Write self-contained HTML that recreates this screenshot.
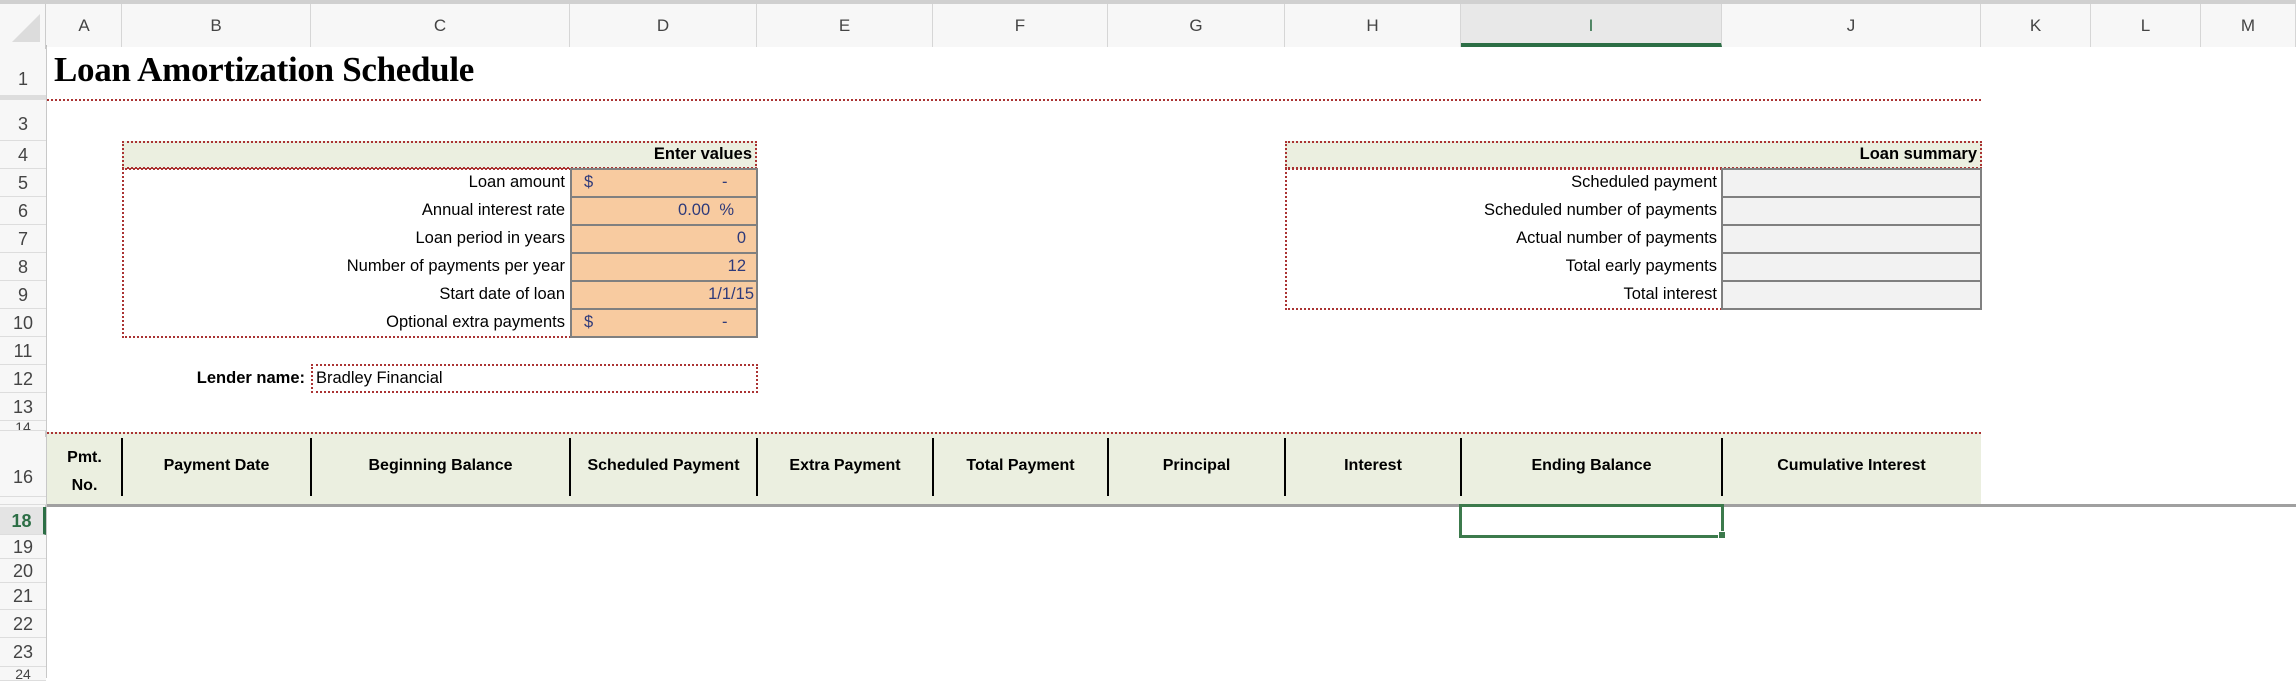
<!DOCTYPE html>
<html><head><meta charset="utf-8"><style>
*{margin:0;padding:0;box-sizing:border-box}
body{width:2296px;height:678px;overflow:hidden;background:#fff;position:relative;font-family:"Liberation Sans",sans-serif}
.a{position:absolute}
.ch{position:absolute;top:4px;height:43px;line-height:43px;text-align:center;font-size:17px;color:#444;border-right:1px solid #d6d6d6;background:#f7f7f7}
.rh{position:absolute;left:0;width:46px;text-align:center;font-size:18px;color:#444;background:#f7f7f7;border-bottom:1px solid #ddd}
.t{position:absolute;font-size:16.5px;color:#000;white-space:nowrap}
.r{text-align:right}
.in{position:absolute;background:#f8cba0;border:2px solid #808080;color:#2e3a7a;font-size:16.5px}
.sm{position:absolute;background:#f2f2f2;border:2px solid #808080}
.hd{position:absolute;font-weight:bold;font-size:16px;text-align:center;white-space:nowrap}
.vd{position:absolute;top:438px;height:58px;width:2px;background:#000}
</style></head><body>
<!-- header band -->
<div class="a" style="left:0;top:0;width:2296px;height:4px;background:#d0d0d0"></div>
<div class="a" style="left:0;top:4px;width:2296px;height:43px;background:#f7f7f7;border-bottom:2px solid #bdbdbd"></div>
<div class="a" style="left:0;top:4px;width:46px;height:43px;background:#f7f7f7;border-right:1px solid #ccc"></div>
<div class="a" style="left:12px;top:14px;width:0;height:0;border-left:28px solid transparent;border-bottom:28px solid #dcdcdc"></div>
<div class="ch" style="left:47px;width:75px">A</div>
<div class="ch" style="left:122px;width:189px">B</div>
<div class="ch" style="left:311px;width:259px">C</div>
<div class="ch" style="left:570px;width:187px">D</div>
<div class="ch" style="left:757px;width:176px">E</div>
<div class="ch" style="left:933px;width:175px">F</div>
<div class="ch" style="left:1108px;width:177px">G</div>
<div class="ch" style="left:1285px;width:176px">H</div>
<div class="ch" style="left:1461px;width:261px;background:#e8e8e8;color:#2c6e45;border-bottom:4px solid #2c6e45;height:43px">I</div>
<div class="ch" style="left:1722px;width:259px">J</div>
<div class="ch" style="left:1981px;width:110px">K</div>
<div class="ch" style="left:2091px;width:110px">L</div>
<div class="ch" style="left:2201px;width:95px">M</div>
<!-- row headers -->
<div class="a" style="left:0;top:47px;width:47px;height:631px;background:#f7f7f7;border-right:2px solid #c8c8c8"></div>
<div class="rh" style="top:49px;height:47px;line-height:60px">1</div>
<div class="rh" style="top:96px;height:4px;background:#ddd"></div>
<div class="rh" style="top:100px;height:41px;line-height:48px">3</div>
<div class="rh" style="top:141px;height:28px;line-height:28px">4</div>
<div class="rh" style="top:169px;height:28px;line-height:28px">5</div>
<div class="rh" style="top:197px;height:28px;line-height:28px">6</div>
<div class="rh" style="top:225px;height:28px;line-height:28px">7</div>
<div class="rh" style="top:253px;height:28px;line-height:28px">8</div>
<div class="rh" style="top:281px;height:28px;line-height:28px">9</div>
<div class="rh" style="top:309px;height:28px;line-height:28px">10</div>
<div class="rh" style="top:337px;height:28px;line-height:28px">11</div>
<div class="rh" style="top:365px;height:28px;line-height:28px">12</div>
<div class="rh" style="top:393px;height:28px;line-height:28px">13</div>
<div class="rh" style="top:421px;height:10px;overflow:hidden;line-height:12px;font-size:14px">14</div>
<div class="rh" style="top:437px;height:60px;line-height:80px">16</div>
<div class="rh" style="top:497px;height:8px"></div>
<div class="rh" style="top:507px;height:28px;line-height:28px;color:#2c6e45;font-weight:bold;background:#e4e4e4;border-right:3px solid #2c6e45">18</div>
<div class="rh" style="top:535px;height:24px;line-height:24px">19</div>
<div class="rh" style="top:559px;height:24px;line-height:24px">20</div>
<div class="rh" style="top:583px;height:27px;line-height:27px">21</div>
<div class="rh" style="top:610px;height:28px;line-height:28px">22</div>
<div class="rh" style="top:638px;height:29px;line-height:29px">23</div>
<div class="rh" style="top:667px;height:14px;line-height:14px;font-size:14px">24</div>
<!-- title -->
<div class="a" style="left:54px;top:50px;font-family:'Liberation Serif',serif;font-weight:bold;font-size:35px;letter-spacing:-0.3px">Loan Amortization Schedule</div>
<div class="a" style="left:47px;top:99px;width:1934px;border-top:2px dotted #a33"></div>
<!-- enter values box -->
<div class="a" style="left:122px;top:141px;width:635px;height:28px;background:#ebefe0;border:2px dotted #a33"></div>
<div class="t r" style="left:122px;top:145px;width:630px;font-weight:bold">Enter values</div>
<div class="a" style="left:122px;top:168px;width:449px;height:170px;border:2px dotted #a33;border-right:none"></div>
<div class="t r" style="left:130px;top:173px;width:435px">Loan amount</div>
<div class="t r" style="left:130px;top:201px;width:435px">Annual interest rate</div>
<div class="t r" style="left:130px;top:229px;width:435px">Loan period in years</div>
<div class="t r" style="left:130px;top:257px;width:435px">Number of payments per year</div>
<div class="t r" style="left:130px;top:285px;width:435px">Start date of loan</div>
<div class="t r" style="left:130px;top:313px;width:435px">Optional extra payments</div>
<div class="in" style="left:570px;top:168px;width:188px;height:30px"><span class="a" style="left:12px;top:3px">$</span><span class="a" style="left:150px;top:3px">-</span></div>
<div class="in" style="left:570px;top:196px;width:188px;height:30px"><span class="a" style="right:22px;top:3px">0.00&nbsp;&nbsp;%</span></div>
<div class="in" style="left:570px;top:224px;width:188px;height:30px"><span class="a" style="right:10px;top:3px">0</span></div>
<div class="in" style="left:570px;top:252px;width:188px;height:30px"><span class="a" style="right:10px;top:3px">12</span></div>
<div class="in" style="left:570px;top:280px;width:188px;height:30px"><span class="a" style="right:2px;top:3px">1/1/15</span></div>
<div class="in" style="left:570px;top:308px;width:188px;height:30px"><span class="a" style="left:12px;top:3px">$</span><span class="a" style="left:150px;top:3px">-</span></div>
<!-- lender -->
<div class="t r" style="left:122px;top:369px;width:183px;font-weight:bold">Lender name:</div>
<div class="a" style="left:311px;top:364px;width:447px;height:29px;border:2px dotted #a33"></div>
<div class="t" style="left:316px;top:369px">Bradley Financial</div>
<!-- loan summary -->
<div class="a" style="left:1285px;top:141px;width:697px;height:28px;background:#ebefe0;border:2px dotted #a33"></div>
<div class="t r" style="left:1285px;top:145px;width:692px;font-weight:bold">Loan summary</div>
<div class="a" style="left:1285px;top:168px;width:437px;height:142px;border:2px dotted #a33;border-right:none"></div>
<div class="t r" style="left:1290px;top:173px;width:427px">Scheduled payment</div>
<div class="t r" style="left:1290px;top:201px;width:427px">Scheduled number of payments</div>
<div class="t r" style="left:1290px;top:229px;width:427px">Actual number of payments</div>
<div class="t r" style="left:1290px;top:257px;width:427px">Total early payments</div>
<div class="t r" style="left:1290px;top:285px;width:427px">Total interest</div>
<div class="sm" style="left:1721px;top:168px;width:261px;height:30px"></div>
<div class="sm" style="left:1721px;top:196px;width:261px;height:30px"></div>
<div class="sm" style="left:1721px;top:224px;width:261px;height:30px"></div>
<div class="sm" style="left:1721px;top:252px;width:261px;height:30px"></div>
<div class="sm" style="left:1721px;top:280px;width:261px;height:30px"></div>
<!-- table header -->
<div class="a" style="left:47px;top:432px;width:1934px;height:73px;background:#ebefe0;border-top:2px dotted #a33"></div>
<div class="a" style="left:47px;top:504px;width:2249px;height:3px;background:#a0a0a0"></div>
<div class="vd" style="left:121px"></div>
<div class="vd" style="left:310px"></div>
<div class="vd" style="left:569px"></div>
<div class="vd" style="left:756px"></div>
<div class="vd" style="left:932px"></div>
<div class="vd" style="left:1107px"></div>
<div class="vd" style="left:1284px"></div>
<div class="vd" style="left:1460px"></div>
<div class="vd" style="left:1721px"></div>
<div class="hd" style="left:47px;top:444px;width:75px;line-height:28px">Pmt.<br>No.</div>
<div class="hd" style="left:122px;top:457px;width:189px">Payment Date</div>
<div class="hd" style="left:311px;top:457px;width:259px">Beginning Balance</div>
<div class="hd" style="left:570px;top:457px;width:187px">Scheduled Payment</div>
<div class="hd" style="left:757px;top:457px;width:176px">Extra Payment</div>
<div class="hd" style="left:933px;top:457px;width:175px">Total Payment</div>
<div class="hd" style="left:1108px;top:457px;width:177px">Principal</div>
<div class="hd" style="left:1285px;top:457px;width:176px">Interest</div>
<div class="hd" style="left:1461px;top:457px;width:261px">Ending Balance</div>
<div class="hd" style="left:1722px;top:457px;width:259px">Cumulative Interest</div>
<!-- selection -->
<div class="a" style="left:1459px;top:504px;width:265px;height:34px;border:3px solid #3c7a4c"></div>
<div class="a" style="left:1718px;top:531px;width:8px;height:8px;background:#3c7a4c;border:1px solid #fff"></div>
</body></html>
